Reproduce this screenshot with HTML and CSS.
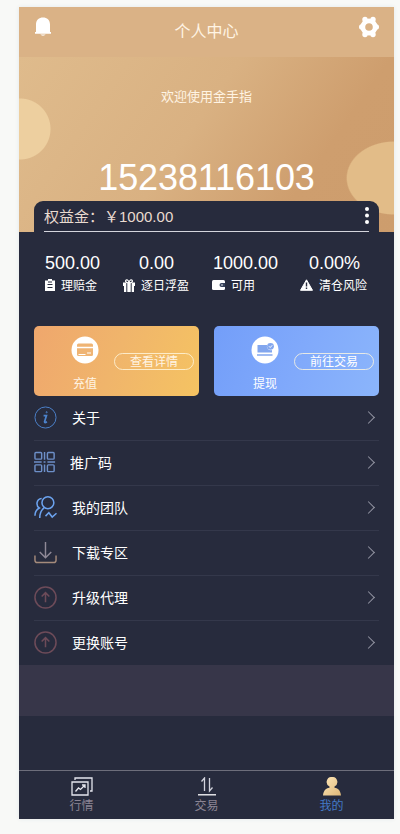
FILE: index.html
```html
<!DOCTYPE html>
<html lang="zh-CN">
<head>
<meta charset="utf-8">
<title>个人中心</title>
<link rel="stylesheet" href="styles.css">
</head>
<body>
<main class="phone">
  <header class="topbar">
    <svg class="bell" width="18" height="20" viewBox="0 0 18 20" fill="#fff"><path d="M2 15V7.500C2 3 5 .5 9 .5S16 3 16 7.500V15h1v1.700H1V15zM6.500 17.500h5c-.5 1.500-4.500 1.500-5 0z"/></svg>
    <h1>个人中心</h1>
    <svg class="gear" width="20" height="22" viewBox="0 0 20 22"><circle cx="10" cy="11" r="6.200" fill="none" stroke="#fff" stroke-width="4.800"/><g fill="#fff"><circle cx="6" cy="3.500" r="2.700"/><circle cx="14" cy="3.500" r="2.700"/><circle cx="2.700" cy="11" r="2.700"/><circle cx="17.300" cy="11" r="2.700"/><circle cx="6" cy="18.500" r="2.700"/><circle cx="14" cy="18.500" r="2.700"/></g></svg>
  </header>
  <section class="hero">
    <p class="welcome">欢迎使用金手指</p>
    <p class="account">15238116103</p>
    <div class="equity">
      <div class="equity-line"><span>权益金：￥1000.00</span>
        <svg width="4" height="18" viewBox="0 0 4 18" fill="#fff"><circle cx="2" cy="2" r="2"/><circle cx="2" cy="8.500" r="2"/><circle cx="2" cy="15" r="2"/></svg>
      </div>
    </div>
  </section>
  <section class="stats">
    <div class="stat"><b>500.00</b><span>
      <svg width="10" height="12" viewBox="0 0 10 12"><path fill="#fff" d="M0 1.500h3V0h4v1.500h3V12H0z"/><path stroke="#272b3d" d="M3 3h4M2.500 5.500h5M2.500 8.500h5"/></svg>理赔金</span></div>
    <div class="stat daily"><b>0.00</b><span>
      <svg width="12" height="13" viewBox="0 0 12 13"><path fill="#fff" d="M0 3.500h3.300V13H1V7H0zM4.300 3.500h3.400V13H4.300zM8.700 3.500H12V7h-1v6H8.700z"/><path fill="none" stroke="#fff" stroke-width="1.200" d="M6 4Q3 4 2.500 2.200 3 .5 4.500 1 6 2 6 4q0-2 1.500-3 1.500-.5 2 1.200Q9 4 6 4"/></svg>逐日浮盈</span></div>
    <div class="stat usable"><b>1000.00</b><span>
      <svg width="13" height="10" viewBox="0 0 13 10"><rect width="13" height="10" rx="1.500" fill="#fff"/><path fill="#36415a" d="M13 3H9.500a2 2 0 0 0 0 4H13z"/><circle cx="10" cy="5" r=".8" fill="#fff"/></svg>可用</span></div>
    <div class="stat risk"><b>0.00%</b><span>
      <svg width="13" height="12" viewBox="0 0 13 12"><path fill="#fff" stroke="#fff" stroke-linejoin="round" d="M6.500.8 12.500 11.300H.5z"/><path stroke="#272b3d" stroke-width="1.400" d="M6.500 3.500v4M6.500 8.600V10"/></svg>清仓风险</span></div>
  </section>
  <section class="cards">
    <div class="card gold">
      <div class="action"><svg width="28" height="28" viewBox="0 0 28 28"><circle cx="14" cy="14" r="13.500" fill="#fff"/><rect x="6" y="7.500" width="16" height="12.500" rx="1.500" fill="#efb474"/><path stroke="#fff" stroke-width="1.500" d="M6 11.500h16"/><path stroke="#fff" d="M16 17h4M7.500 18.500h7"/></svg><span>充值</span></div>
      <button class="pill">查看详情</button>
    </div>
    <div class="card blue">
      <div class="action"><svg width="28" height="28" viewBox="0 0 28 28"><circle cx="14" cy="14" r="13.500" fill="#fff"/><path fill="#82a6ee" d="M6.500 9H16a4 4 0 0 0 5 5v2.500H6.500zM6 18.300h15.500v1.500H6z"/><circle cx="19.500" cy="10.300" r="3.400" fill="#82a6ee"/><path fill="none" stroke="#fff" d="m18 10.300 1.200 1.200 2-2.200"/></svg><span>提现</span></div>
      <button class="pill">前往交易</button>
    </div>
  </section>
  <ul class="menu">
    <li><svg class="icon" viewBox="0 0 24 24" stroke="#4c83cd"><circle cx="12" cy="12" r="11"/><path stroke-width="1.800" d="M10 10h3l-2 6.500q0 1.500 2.500 0"/><circle cx="13.200" cy="6.500" r=".6"/></svg><span>关于</span><i></i></li>
    <li class="code"><svg class="icon" viewBox="0 0 24 24" stroke="#6d8fc8" stroke-width="1.500"><rect x="1" y="1.500" width="7" height="7" rx="1"/><rect x="14" y="1.500" width="7" height="7" rx="1"/><rect x="1" y="14.500" width="7" height="7" rx="1"/><rect x="14" y="14.500" width="7" height="7" rx="1"/><path d="M11 1v8M11 14v8M0 11.500h8M10 11.500h2M14 11.500h8"/></svg><span>推广码</span><i></i></li>
    <li><svg class="icon" viewBox="0 0 24 24" stroke="#6ca3ef" stroke-width="1.600"><circle cx="14.500" cy="7" r="6.200"/><path d="M8 2.500C2 3 2 10.500 5.500 12.500 2 14.500 1 17 1 20.500M10.500 12.500C7 15 6 18.500 6 23M12 21l3.500-3.500 3.500 4.500 4.500-4"/></svg><span>我的团队</span><i></i></li>
    <li><svg class="icon" viewBox="0 0 24 24" stroke="#8f8997" stroke-width="1.500"><path d="M12 1v16M6 11.500l6 6 6-6"/><path stroke="#a58b7c" d="M1 15v5q0 2.500 2.500 2.500h17Q23 22.500 23 20v-5"/></svg><span>下载专区</span><i></i></li>
    <li><svg class="icon" viewBox="0 0 24 24" stroke="#6d4b59" stroke-width="1.600"><circle cx="12" cy="12" r="11"/><path d="M12 17V7M8 11l4-4 4 4"/></svg><span>升级代理</span><i></i></li>
    <li><svg class="icon" viewBox="0 0 24 24" stroke="#6d4b59" stroke-width="1.600"><circle cx="12" cy="12" r="11"/><path d="M12 17V7M8 11l4-4 4 4"/></svg><span>更换账号</span><i></i></li>
  </ul>
  <div class="band"></div>
  <nav class="tabs">
    <a><svg width="22" height="19" viewBox="0 0 22 19" fill="none" stroke="#e5e6ee" stroke-width="1.300"><path d="M4 3V1h17v13h-2M1 5h16v13H1zM4.500 14.500l3-3.500 2 1.500 4-4M11 8h3v3"/></svg><span>行情</span></a>
    <a><svg width="18" height="19" viewBox="0 0 18 19" fill="none" stroke="#d2d3dd" stroke-width="1.300"><path d="M3.500 4.500 6.500 1v13M11.500 1v13l3-3.500"/><path stroke="#fff" d="M0 17.800h18"/></svg><span>交易</span></a>
    <a class="active"><svg width="18" height="19" viewBox="0 0 18 19"><defs><linearGradient id="person" x2="1" y2="1"><stop stop-color="#ffe8b9"/><stop offset="1" stop-color="#dfb879"/></linearGradient></defs><path fill="url(#person)" d="M9 0a5 5 0 0 1 2.500 9.500v1.200c4 .6 6 3 6.500 7.800H0c.5-4.800 2.500-7.200 6.500-7.800V9.500A5 5 0 0 1 9 0z"/></svg><span>我的</span></a>
  </nav>
</main>
</body>
</html>
```
FILE: styles.css
```css
* { box-sizing: border-box; }
body {
  margin: 0;
  padding: 7px 6px 15px 19px;
  background: #f8f9f7;
  font-family: "Liberation Sans", "Noto Sans CJK SC", sans-serif;
  color: #fff;
}
h1, p, ul { margin: 0; padding: 0; }
svg { display: block; flex: none; }
.phone {
  width: 375px;
  height: 812px;
  display: flex;
  flex-direction: column;
  background: #272b3d;
  box-shadow: 0 0 4px #e3e8e9;
}
.topbar {
  height: 50px;
  padding: 0 15px;
  display: flex;
  justify-content: space-between;
  background: #dab286;
}
.topbar h1 { padding-left: 2px; font-size: 16px; font-weight: 400; line-height: 49px; color: #fff4e4; }
.bell { margin-top: 10px; }
.gear { margin-top: 9px; }
.hero {
  height: 175px;
  padding: 0 15px;
  display: flex;
  flex-direction: column;
  text-align: center;
  background:
    radial-gradient(circle at 1px 72px, #edcf9f 30px, transparent 31px),
    radial-gradient(ellipse 48px 37px at 375px 121px, #e2bc88 97%, transparent 100%),
    linear-gradient(125deg, #dfbb8c 0%, #d9b182 45%, #ce9e6e 75%, #cd9d6d 100%);
}
.welcome { padding-top: 30px; height: 97px; font-size: 13px; line-height: 20px; color: #fff4e4; }
.account { height: 47px; font-size: 36px; line-height: 47px; letter-spacing: -.1px; }
.equity {
  height: 31px;
  padding: 0 10px;
  background: #272b3d;
  border-radius: 9px 9px 0 0;
}
.equity-line {
  height: 31px;
  display: flex;
  justify-content: space-between;
  border-bottom: 1px solid #d4d5dd;
  font-size: 15px;
  line-height: 31px;
  color: #eadbd0;
}
.equity-line svg { margin-top: 6px; }
.stats {
  height: 94px;
  padding: 20px 0 0 26px;
  display: grid;
  grid-template-columns: 78px 89px 88px 94px;
}
.stat b { display: block; font-size: 18px; font-weight: 400; line-height: 22px; }
.stat span { display: flex; align-items: center; gap: 6px; font-size: 12px; line-height: 24px; white-space: nowrap; }
.stat svg { margin-top: -2px; }
.daily b { padding-left: 16px; }
.usable b { padding-left: 1px; }
.risk b { padding-left: 9px; }
.cards { padding: 0 15px; display: grid; grid-template-columns: 1fr 1fr; gap: 15px; }
.card {
  height: 70px;
  padding-right: 5px;
  display: flex;
  justify-content: space-between;
  border-radius: 5px;
}
.gold { background: linear-gradient(110deg, #efa76d, #f0b56b 50%, #f5c362); }
.blue { background: linear-gradient(110deg, #739ef9, #80a9fb 50%, #8bb5fb); }
.action {
  width: 28px;
  margin: 10px 0 0 37px;
  display: flex;
  flex-direction: column;
  align-items: center;
  font-size: 12px;
  line-height: 18px;
  color: #fff4e4;
}
.action span { margin-top: 11px; white-space: nowrap; }
.pill {
  width: 80px;
  height: 17px;
  margin: 27px 0 0;
  padding: 1px 0 0;
  border: 1px solid rgba(255, 247, 224, .8);
  border-radius: 9px;
  background: transparent;
  color: #fff4e4;
  font: 12px/15px "Liberation Sans", "Noto Sans CJK SC", sans-serif;
}
.blue .action, .blue .pill { color: #fff; }
.menu { padding: 0 15px; list-style: none; }
.menu li {
  height: 45px;
  padding: 0 6px 1px 0;
  display: flex;
  align-items: center;
  gap: 15px;
  border-bottom: 1px solid #34384b;
  font-size: 14px;
}
.menu span { margin-top: -1px; }
.menu .code { gap: 13px; }
.menu li:last-child { height: 44px; border-bottom: 0; }
.icon { width: 23px; height: 23px; fill: none; }
.menu i {
  width: 9px;
  height: 9px;
  margin-left: auto;
  border: solid #9496a3;
  border-width: 1px 1px 0 0;
  transform: rotate(45deg);
}
.band { height: 51px; background: #373649; }
.tabs {
  height: 49px;
  margin-top: auto;
  display: grid;
  grid-template-columns: repeat(3, 1fr);
  border-top: 1px solid #6d6e7b;
}
.tabs a {
  padding-top: 6px;
  display: flex;
  flex-direction: column;
  align-items: center;
  font-size: 12px;
  line-height: 18px;
  color: #8b8493;
}
.tabs .active { color: #4379c5; }
.tabs span { margin-top: 1px; }
```
